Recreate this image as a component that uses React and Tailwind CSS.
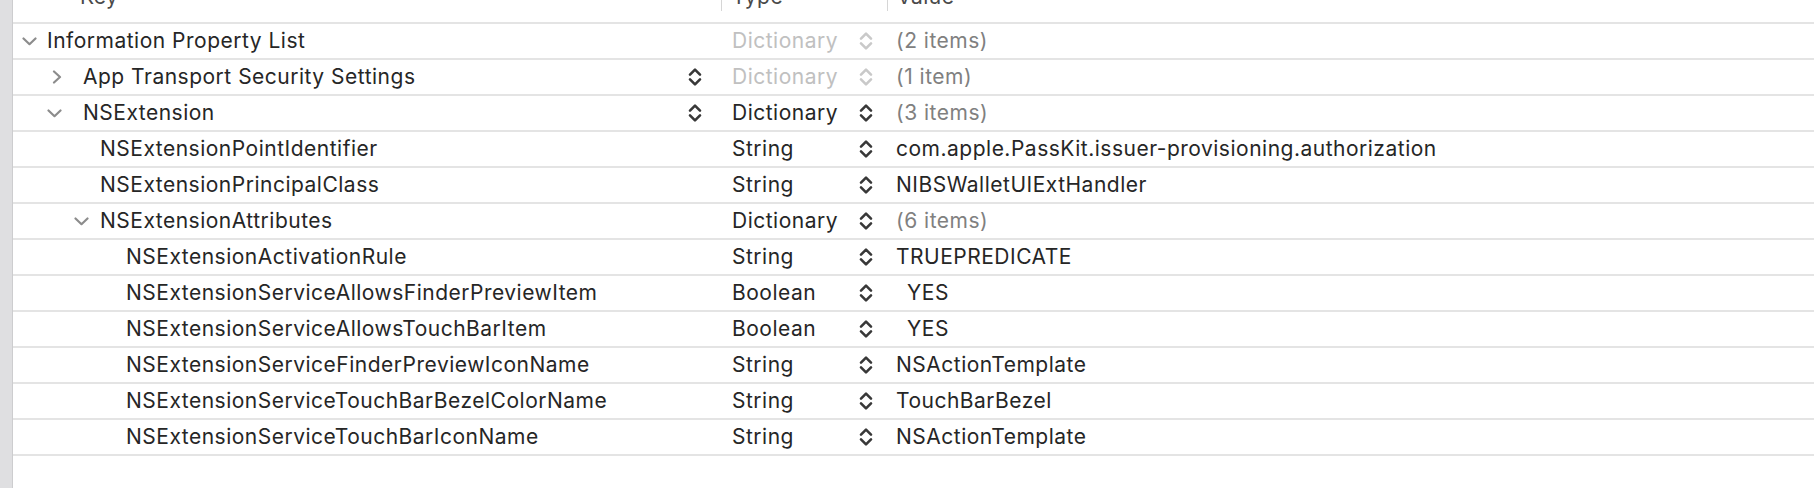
import React from 'react';

const Stepper = ({ dim }) => (
  <svg width="14" height="22" viewBox="0 0 14 22" fill="none" className="shrink-0">
    <path
      d="M2 8.6 L7 3.6 L12 8.6 M2 13.4 L7 18.4 L12 13.4"
      stroke={dim ? '#c9c9c9' : '#383838'}
      strokeWidth="2.6"
      strokeLinecap="round"
      strokeLinejoin="round"
    />
  </svg>
);

const ChevronDown = () => (
  <svg width="15" height="9" viewBox="0 0 15 9" fill="none" className="shrink-0">
    <path d="M1.5 1.5 L7.5 7.2 L13.5 1.5" stroke="#8c8c8c" strokeWidth="2.2" strokeLinecap="round" strokeLinejoin="round" />
  </svg>
);

const ChevronRight = () => (
  <svg width="10" height="14" viewBox="0 0 10 14" fill="none" className="shrink-0">
    <path d="M2 1.5 L8 7 L2 12.5" stroke="#8c8c8c" strokeWidth="2.2" strokeLinecap="round" strokeLinejoin="round" />
  </svg>
);

const rows = [
  { key: 'Information Property List', chev: 'down', pad: 'pl-[9px]', gap: 'ml-[10px]', type: 'Dictionary', typeDim: true, value: '(2 items)', muted: true },
  { key: 'App Transport Security Settings', chev: 'right', pad: 'pl-[39px]', gap: 'ml-[21px]', keyStep: true, type: 'Dictionary', typeDim: true, value: '(1 item)', muted: true },
  { key: 'NSExtension', chev: 'down', pad: 'pl-[34px]', gap: 'ml-[21px]', keyStep: true, type: 'Dictionary', value: '(3 items)', muted: true },
  { key: 'NSExtensionPointIdentifier', pad: 'pl-[87px]', type: 'String', value: 'com.apple.PassKit.issuer-provisioning.authorization' },
  { key: 'NSExtensionPrincipalClass', pad: 'pl-[87px]', type: 'String', value: 'NIBSWalletUIExtHandler' },
  { key: 'NSExtensionAttributes', chev: 'down', pad: 'pl-[61px]', gap: 'ml-[11px]', type: 'Dictionary', value: '(6 items)', muted: true },
  { key: 'NSExtensionActivationRule', pad: 'pl-[113px]', type: 'String', value: 'TRUEPREDICATE' },
  { key: 'NSExtensionServiceAllowsFinderPreviewItem', pad: 'pl-[113px]', type: 'Boolean', value: 'YES', bool: true },
  { key: 'NSExtensionServiceAllowsTouchBarItem', pad: 'pl-[113px]', type: 'Boolean', value: 'YES', bool: true },
  { key: 'NSExtensionServiceFinderPreviewIconName', pad: 'pl-[113px]', type: 'String', value: 'NSActionTemplate' },
  { key: 'NSExtensionServiceTouchBarBezelColorName', pad: 'pl-[113px]', type: 'String', value: 'TouchBarBezel' },
  { key: 'NSExtensionServiceTouchBarIconName', pad: 'pl-[113px]', type: 'String', value: 'NSActionTemplate' },
];

const Row = ({ r }) => (
  <div className="flex h-[36px] items-center border-t-2 border-[#e4e4e4]">
    <div className={`flex w-[709px] shrink-0 items-center pr-[20px] ${r.pad}`}>
      {r.chev === 'down' && <ChevronDown />}
      {r.chev === 'right' && <ChevronRight />}
      <span className={`flex-1 whitespace-nowrap ${r.chev ? r.gap : ''}`}>{r.key}</span>
      {r.keyStep && <Stepper />}
    </div>
    <div className="flex w-[166px] shrink-0 items-center pl-[10px] pr-[15px]">
      <span className={`flex-1 ${r.typeDim ? 'text-[#c0c0c0]' : ''}`}>{r.type}</span>
      <Stepper dim={r.typeDim} />
    </div>
    <div className={`whitespace-nowrap ${r.bool ? 'pl-[19px]' : 'pl-[8px]'} ${r.muted ? 'text-[#808080]' : ''}`}>
      {r.value}
    </div>
  </div>
);

export default function App() {
  return (
    <div className="flex h-[488px] w-[1814px] overflow-hidden bg-white font-['Inter',sans-serif] text-[21px] tracking-[0.5px] text-[#262626]">
      <div className="w-[13px] shrink-0 border-r border-[#cdcdcf] bg-[#dfdfe1]" />
      <div className="flex-1">
        <div className="flex h-[22px] items-start overflow-hidden text-[#4a4a4a]">
          <div className="w-[708px] shrink-0 pl-[67px]">
            <span className="-mt-[13px] block leading-[20px]">Key</span>
          </div>
          <div className="h-[11px] w-px shrink-0 bg-[#d6d6d6]" />
          <div className="w-[165px] shrink-0 pl-[10px]">
            <span className="-mt-[13px] block leading-[20px]">Type</span>
          </div>
          <div className="h-[11px] w-px shrink-0 bg-[#d6d6d6]" />
          <div className="pl-[9px]">
            <span className="-mt-[13px] block leading-[20px]">Value</span>
          </div>
        </div>
        {rows.map((r) => (
          <Row key={r.key} r={r} />
        ))}
        <div className="border-t-2 border-[#e4e4e4]" />
      </div>
    </div>
  );
}
